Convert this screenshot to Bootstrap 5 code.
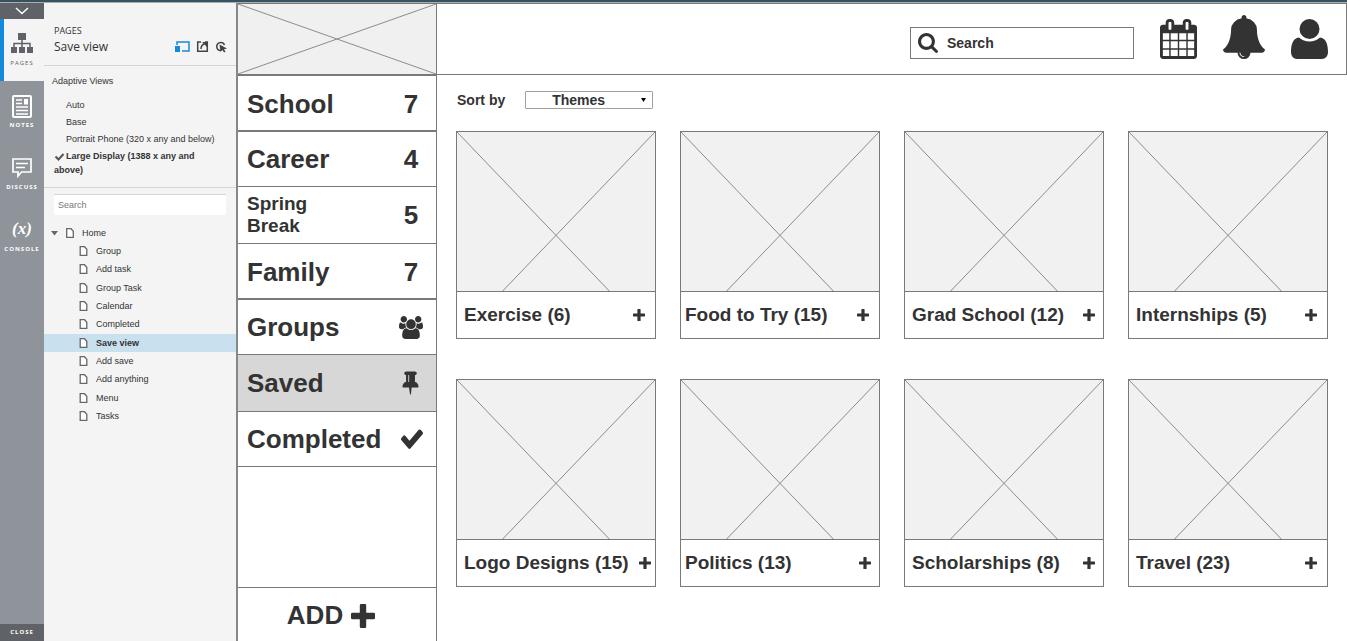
<!DOCTYPE html>
<html lang="en">
<head>
<meta charset="utf-8">
<meta name="viewport" content="width=device-width, initial-scale=1">
<title>Save view</title>
<link href="https://cdn.jsdelivr.net/npm/bootstrap@5.3.0/dist/css/bootstrap.min.css" rel="stylesheet">
<style>
  :root { --line: #797979; --ink: #333; --rail: #8f949a; --rail-dark: #5f6266; --blue: #138bdd; }
  body { font-family: "Liberation Sans", Arial, sans-serif; color: var(--ink); background: #fff; border-top: 2px solid #38535f; }
  a { color: inherit; text-decoration: none; }
  svg { display: block; flex: none; }
  .ink { fill: var(--ink); }
  .shell { min-height: calc(100vh - 2px); border-top: 1px solid #a9adb0; }

  /* Icon rail */
  .rail { flex: none; width: 44px; background: var(--rail); color: #fff; font: bold 6px/10px "Open Sans", sans-serif; letter-spacing: 1px; }
  .rail button { border: 0; padding: 0; color: #fff; background: var(--rail-dark); }
  .rail-toggle { height: 16px; }
  .rail-close { height: 17px; font-size: 6px; font-weight: 700; line-height: 17px; letter-spacing: 1px; }
  .rail-tab { height: 62px; padding-top: 13px; }
  .rail-tab .glyph { height: 24px; margin-bottom: 2px; }
  .rail-tab.current { background: #f4f4f4; color: #5f6266; border-left: 4px solid var(--blue); font-weight: 400; }
  .fx { font: italic bold 17px/22px "Liberation Serif", serif; letter-spacing: 0; }

  /* Pages panel */
  .pages { flex: none; width: 192px; background: #f4f4f4; font-size: 9px; line-height: 14px; }
  .pages-head { height: 63px; padding: 21px 8px 0 10px; border-bottom: 1px solid #d5d5d5; font-family: "Open Sans", sans-serif; }
  .pages-head .over { font-size: 9px; line-height: 14px; }
  .pages-head h1 { font-size: 12px; line-height: 18px; font-weight: 400; margin: 0; }
  .views { padding: 8px 8px 10px; border-bottom: 1px solid #d5d5d5; }
  .views ul { margin-top: 10px; }
  .views li { padding-left: 14px; margin-bottom: 3px; }
  .views li.chosen { padding: 0 8px 0 2px; margin: 0; font-weight: 700; }
  .views li svg { display: inline-block; margin-right: 1px; }
  .find { width: 172px; height: 21px; margin: 6px 10px 9px; padding: 0 4px; font-size: 9px; border: 0; border-top: 1px solid #d5d5d5; background: #fff; }
  .find::placeholder { color: #777; opacity: 1; }
  .tree a { height: 18px; gap: 8px; }
  .tree .root { padding-left: 7px; }
  .tree ul a { padding-left: 35px; }
  .tree ul li:nth-child(3n) { margin-top: 1px; }
  .tree .active { background: #c9e0ef; font-weight: 700; }

  /* Category menu */
  .menu { flex: none; width: 201px; border-left: 2px solid #85888b; border-right: 1px solid var(--line); }
  .menu-logo { height: 73px; border-top: 1px solid var(--line); border-bottom: 2px solid var(--line); background: #f0f0f0; }
  .menu-item { height: 55px; padding: 0 13px 0 9px; font-size: 26px; font-weight: 700; line-height: 30px; border-bottom: 1px solid var(--line); }
  .menu-item.heavy { height: 56px; padding-top: 2px; border-bottom-width: 2px; }
  .menu-item.roomy { height: 57px; }
  .menu-item .count { width: 24px; text-align: center; }
  .menu-item .long { font-size: 19px; line-height: 22px; }
  .menu-item.active { background: #d7d7d7; }
  .menu-add { height: 54px; border: 0; border-top: 1px solid var(--line); background: #fff; color: var(--ink); font-size: 26px; font-weight: 700; gap: 8px; padding: 2px 12px 0 0; }

  /* Main area */
  .bar { height: 72px; padding: 0 18px; gap: 26px; border: 1px solid var(--line); border-left: 0; }
  .bar button { border: 0; padding: 0; background: none; }
  .searchbox { width: 224px; height: 32px; padding: 0 7px; gap: 9px; border: 1px solid var(--line); margin-top: 7px; }
  .searchbox input { border: 0; padding: 1px 0 0; background: none; min-width: 0; font-size: 14px; font-weight: 700; color: var(--ink); }
  .searchbox input::placeholder { color: var(--ink); opacity: 1; }
  .bar .bell { margin-bottom: 4px; }
  .content { padding: 16px 19px 24px; }
  .sort { font-size: 14px; font-weight: 700; line-height: 18px; gap: 20px; margin-bottom: 22px; padding-left: 1px; }
  .sort select { width: 128px; height: 18px; padding: 0 0 0 26px; font-weight: 700; line-height: 16px; color: var(--ink); border: 1px solid #a0a0a0; border-radius: 1px; appearance: none;
    background: #fff url("data:image/svg+xml,%3Csvg xmlns='http://www.w3.org/2000/svg' width='5' height='4'%3E%3Cpath d='M0 0h5L2.500 4z'/%3E%3C/svg%3E") no-repeat right 6px center; }
  .boards { --bs-gutter-x: 24px; --bs-gutter-y: 40px; }
  .board { border: 1px solid var(--line); }
  .board .thumb { width: 100%; height: 160px; background: #f1f1f1; border-bottom: 1px solid var(--line); }
  .board-foot { height: 46px; padding: 0 10px 0 7px; font-size: 19px; font-weight: 700; line-height: 22px; }
  .board-foot button { border: 0; padding: 0; background: none; }
  .cross { stroke: #8c8c8c; stroke-width: 1; fill: none; vector-effect: non-scaling-stroke; }
</style>
</head>
<body>
<svg width="0" height="0" class="position-absolute" aria-hidden="true">
  <symbol id="page" viewBox="0 0 8 10"><path d="M.7.7h4.300l2.300 2.500v6.100H.7z" fill="#fff" stroke="#63676c" stroke-width="1.300"/></symbol>
  <symbol id="plus" viewBox="0 0 12 12"><path d="M5 0h2q.6 0 .6.600V4.400h3.800q.6 0 .6.600v2q0 .6-.6.600H7.600v3.800q0 .6-.6.600H5q-.6 0-.6-.6V7.600H.6Q0 7.600 0 7V5q0-.6.600-.6h3.800V.6Q4.400 0 5 0z" fill="#333"/></symbol>
  <symbol id="cross" viewBox="0 0 198 160" preserveAspectRatio="none"><path class="cross" d="M0 0L198 208M198 0L0 208"/></symbol>
</svg>

<div class="shell d-flex">
  <nav class="rail d-flex flex-column text-center" aria-label="Tools">
    <button class="rail-toggle d-flex justify-content-center align-items-center" aria-label="Collapse"><svg width="14" height="8" viewBox="0 0 14 8"><path d="M1 1l6 5.500L13 1" fill="none" stroke="#fff" stroke-width="1.500"/></svg></button>
    <a href="#" class="rail-tab current d-block pe-1">
      <span class="glyph d-flex justify-content-center"><svg width="22" height="21" viewBox="0 0 22 21"><g fill="#5f6266"><path d="M7 1h8v7H7zM0 15h6v6H0zM8 15h6v6H8zM16 15h6v6h-6z"/></g><path d="M11 8v7M3 15v-3.500h16V15" fill="none" stroke="#5f6266" stroke-width="1.500"/></svg></span>PAGES</a>
    <a href="#" class="rail-tab d-block">
      <span class="glyph d-flex justify-content-center"><svg width="20" height="24" viewBox="0 0 20 24"><rect x="1" y="2" width="18" height="21" rx="1" fill="none" stroke="#fff" stroke-width="2"/><path d="M4 6h6M4 9.500h6M4 13h12M4 16.500h12M4 20h12" stroke="#fff" stroke-width="1.500"/><path d="M12 5h4v5.500h-4z" fill="#fff"/></svg></span>NOTES</a>
    <a href="#" class="rail-tab d-block">
      <span class="glyph d-flex justify-content-center"><svg width="20" height="22" viewBox="0 0 20 22"><path d="M1 3h18v13H9.500L6 20v-4H1z" fill="none" stroke="#fff" stroke-width="1.700"/><path d="M4 7.500h12M4 11.500h9" stroke="#fff" stroke-width="1.500"/></svg></span>DISCUSS</a>
    <a href="#" class="rail-tab d-block"><span class="glyph fx d-block">(x)</span>CONSOLE</a>
    <button class="rail-close mt-auto">CLOSE</button>
  </nav>

  <aside class="pages">
    <header class="pages-head">
      <div class="over">PAGES</div>
      <div class="d-flex align-items-center">
        <h1 class="me-auto">Save view</h1>
        <svg width="53" height="12" viewBox="0 0 53 12"><path d="M2 4V1h12v9H7" fill="none" stroke="#138bdd" stroke-width="1.500"/><path d="M0 5h5v6H0z" fill="#138bdd"/><g fill="none" stroke="#444" stroke-width="1.500"><path d="M26 1h-3.300v9.300h9.600V1H30M26 8c0-3 1-4.500 4-5.500"/><path d="M45.500 9.500A4 4 0 1 1 49.500 4"/></g><path d="M27 1h5v5zM44.500 3.500l7.500 4-3 .7 1.500 2.600-1.500.8-1.500-2.600L45.500 11z" fill="#444"/></svg>
      </div>
    </header>
    <section class="views">
      <div>Adaptive Views</div>
      <ul class="list-unstyled mb-0">
        <li><a href="#">Auto</a></li>
        <li><a href="#">Base</a></li>
        <li><a href="#">Portrait Phone (320 x any and below)</a></li>
        <li class="chosen"><a href="#"><svg width="11" height="8" viewBox="0 0 11 8"><path d="M1.500 3.500L4.500 6.500 9.500 1" fill="none" stroke="#555" stroke-width="2"/></svg>Large Display (1388 x any and above)</a></li>
      </ul>
    </section>
    <input class="find d-block" type="search" placeholder="Search" aria-label="Search pages">
    <ul class="tree list-unstyled mb-0">
      <li><a href="#" class="root d-flex align-items-center"><svg width="7" height="5" viewBox="0 0 7 5"><path d="M0 0h7L3.500 4.500z" fill="#63676c"/></svg><svg width="8" height="10"><use href="#page"/></svg>Home</a>
        <ul class="list-unstyled">
          <li><a href="#" class="d-flex align-items-center"><svg width="9" height="10"><use href="#page"/></svg>Group</a></li>
          <li><a href="#" class="d-flex align-items-center"><svg width="9" height="10"><use href="#page"/></svg>Add task</a></li>
          <li><a href="#" class="d-flex align-items-center"><svg width="9" height="10"><use href="#page"/></svg>Group Task</a></li>
          <li><a href="#" class="d-flex align-items-center"><svg width="9" height="10"><use href="#page"/></svg>Calendar</a></li>
          <li><a href="#" class="d-flex align-items-center"><svg width="9" height="10"><use href="#page"/></svg>Completed</a></li>
          <li><a href="#" class="active d-flex align-items-center"><svg width="9" height="10"><use href="#page"/></svg>Save view</a></li>
          <li><a href="#" class="d-flex align-items-center"><svg width="9" height="10"><use href="#page"/></svg>Add save</a></li>
          <li><a href="#" class="d-flex align-items-center"><svg width="9" height="10"><use href="#page"/></svg>Add anything</a></li>
          <li><a href="#" class="d-flex align-items-center"><svg width="9" height="10"><use href="#page"/></svg>Menu</a></li>
          <li><a href="#" class="d-flex align-items-center"><svg width="9" height="10"><use href="#page"/></svg>Tasks</a></li>
        </ul>
      </li>
    </ul>
  </aside>

  <nav class="menu d-flex flex-column" aria-label="Categories">
    <div class="menu-logo"><svg width="100%" height="100%" viewBox="0 0 198 70" preserveAspectRatio="none"><path class="cross" d="M0 0L198 70M198 0L0 70"/></svg></div>
    <a href="#" class="menu-item heavy d-flex align-items-center justify-content-between">School<span class="count">7</span></a>
    <a href="#" class="menu-item d-flex align-items-center justify-content-between">Career<span class="count">4</span></a>
    <a href="#" class="menu-item roomy d-flex align-items-center justify-content-between"><span class="long">Spring<br>Break</span><span class="count">5</span></a>
    <a href="#" class="menu-item heavy d-flex align-items-center justify-content-between">Family<span class="count">7</span></a>
    <a href="#" class="menu-item d-flex align-items-center justify-content-between">Groups<svg class="ink" width="24" height="23" viewBox="0 0 1920 1792" preserveAspectRatio="none"><path d="M593 896q-162 5-265 128h-134q-82 0-138-40.500t-56-118.500q0-353 124-353 6 0 43.500 21t97.500 42.500 119 21.500q67 0 133-23-5 37-5 66 0 139 81 256zm1071 637q0 120-73 189.500t-194 69.500h-874q-121 0-194-69.500t-73-189.500q0-53 3.500-103.500t14-109 26.500-108.500 43-97.500 62-81 85.500-53.500 111.500-20q10 0 43 21.500t73 48 107 48 135 21.500 135-21.500 107-48 73-48 43-21.500q61 0 111.500 20t85.500 53.500 62 81 43 97.500 26.500 108.500 14 109 3.500 103.500zm-1024-1277q0 106-75 181t-181 75-181-75-75-181 75-181 181-75 181 75 75 181zm704 384q0 159-112.500 271.500t-271.500 112.500-271.500-112.500-112.500-271.500 112.500-271.500 271.500-112.500 271.500 112.500 112.500 271.500zm576 225q0 78-56 118.500t-138 40.500h-134q-103-123-265-128 81-117 81-256 0-29-5-66 66 23 133 23 59 0 119-21.500t97.500-42.500 43.500-21q124 0 124 353zm-128-609q0 106-75 181t-181 75-181-75-75-181 75-181 181-75 181 75 75 181z"/></svg></a>
    <a href="#" class="menu-item roomy active d-flex align-items-center justify-content-between">Saved<svg class="ink" width="25" height="24" viewBox="0 128 1792 1664"><path d="M800 864v-448q0-14-9-23t-23-9-23 9-9 23v448q0 14 9 23t23 9 23-9 9-23zm672 352q0 26-19 45t-45 19h-429l-51 483q-2 12-10.500 20.500t-20.500 8.500h-1q-27 0-32-27l-76-485h-404q-26 0-45-19t-19-45q0-123 78.500-221.500t177.500-98.500v-512q-52 0-90-38t-38-90 38-90 90-38h640q52 0 90 38t38 90-38 90-90 38v512q99 0 177.500 98.500t78.500 221.500z"/></svg></a>
    <a href="#" class="menu-item d-flex align-items-center justify-content-between">Completed<svg class="ink" width="22" height="20" viewBox="121 310 1550 1212" preserveAspectRatio="none"><path d="M1671 566q0 40-28 68l-724 724-136 136q-28 28-68 28t-68-28l-136-136-362-362q-28-28-28-68t28-68l136-136q28-28 68-28t68 28l294 295 656-657q28-28 68-28t68 28l136 136q28 28 28 68z"/></svg></a>
    <button class="menu-add mt-auto d-flex align-items-center justify-content-center">ADD<svg width="24" height="24"><use href="#plus"/></svg></button>
  </nav>

  <main class="flex-grow-1">
    <header class="bar d-flex align-items-center justify-content-end">
      <label class="searchbox d-flex align-items-center">
        <svg class="ink" width="20" height="20" viewBox="64 128 1664 1664"><path d="M1216 832q0-185-131.500-316.500t-316.500-131.500-316.500 131.500-131.500 316.500 131.500 316.500 316.500 131.500 316.500-131.500 131.500-316.500zm512 832q0 52-38 90t-90 38q-54 0-90-38l-343-342q-179 124-399 124-143 0-273.500-55.500t-225-150-150-225-55.500-273.500 55.500-273.500 150-225 225-150 273.500-55.500 273.500 55.500 225 150 150 225 55.500 273.500q0 220-124 399l343 343q37 37 37 90z"/></svg>
        <input type="text" placeholder="Search" aria-label="Search">
      </label>
      <button aria-label="Calendar"><svg class="ink" width="37" height="40" viewBox="64 0 1664 1792"><path d="M192 1664h288v-288h-288v288zm352 0h320v-288h-320v288zm-352-352h288v-320h-288v320zm352 0h320v-320h-320v320zm-352-384h288v-288h-288v288zm736 736h320v-288h-320v288zm-384-736h320v-288h-320v288zm768 736h288v-288h-288v288zm-384-352h320v-320h-320v320zm-352-864v-288q0-13-9.500-22.500t-22.500-9.500h-64q-13 0-22.500 9.500t-9.500 22.500v288q0 13 9.500 22.500t22.500 9.500h64q13 0 22.500-9.500t9.500-22.500zm736 864h288v-320h-288v320zm-384-384h320v-288h-320v288zm384 0h288v-288h-288v288zm32-480v-288q0-13-9.500-22.500t-22.500-9.500h-64q-13 0-22.500 9.500t-9.500 22.500v288q0 13 9.500 22.500t22.500 9.500h64q13 0 22.500-9.500t9.500-22.500zm384-64v1280q0 52-38 90t-90 38h-1408q-52 0-90-38t-38-90v-1280q0-52 38-90t90-38h128v-96q0-66 47-113t113-47h64q66 0 113 47t47 113v96h384v-96q0-66 47-113t113-47h64q66 0 113 47t47 113v96h128q52 0 90 38t38 90z"/></svg></button>
      <button class="bell" aria-label="Notifications"><svg class="ink" width="42" height="44" viewBox="64 0 1664 1792" preserveAspectRatio="none"><path d="M912 1696q0-16-16-16-59 0-101.500-42.500t-42.500-101.500q0-16-16-16t-16 16q0 73 51.500 124.500t124.500 51.500q16 0 16-16zm816-288q0 52-38 90t-90 38h-448q0 106-75 181t-181 75-181-75-75-181h-448q-52 0-90-38t-38-90q50-42 91-88t85-119.500 74.500-158.500 50-206 19.500-260q0-152 117-282.500t307-158.500q-8-19-8-39 0-40 28-68t68-28 68 28 28 68q0 20-8 39 190 28 307 158.500t117 282.500q0 139 19.500 260t50 206 74.500 158.500 85 119.500 91 88z"/></svg></button>
      <button aria-label="Account"><svg class="ink" width="37" height="40" viewBox="0 0 37 40"><circle cx="18.500" cy="10" r="10"/><path d="M8 18.500q4.500 4 10.500 4t10.500-4c6 .5 8 7 8 14.500 0 4-2.500 7-6 7H6c-3.500 0-6-3-6-7 0-7.500 2-14 8-14.500z"/></svg></button>
    </header>

    <div class="content">
      <div class="sort d-flex align-items-center">
        <label for="sort">Sort by</label>
        <select id="sort"><option>Themes</option></select>
      </div>
      <div class="boards row row-cols-2 row-cols-lg-4">
        <div class="col"><article class="board"><svg class="thumb"><use href="#cross"/></svg><div class="board-foot d-flex align-items-center justify-content-between"><a href="#">Exercise (6)</a><button aria-label="Add to Exercise"><svg width="12" height="12"><use href="#plus"/></svg></button></div></article></div>
        <div class="col"><article class="board"><svg class="thumb"><use href="#cross"/></svg><div class="board-foot d-flex align-items-center justify-content-between ps-1"><a href="#">Food to Try (15)</a><button aria-label="Add to Food to Try"><svg width="12" height="12"><use href="#plus"/></svg></button></div></article></div>
        <div class="col"><article class="board"><svg class="thumb"><use href="#cross"/></svg><div class="board-foot d-flex align-items-center justify-content-between pe-2"><a href="#">Grad School (12)</a><button aria-label="Add to Grad School"><svg width="12" height="12"><use href="#plus"/></svg></button></div></article></div>
        <div class="col"><article class="board"><svg class="thumb"><use href="#cross"/></svg><div class="board-foot d-flex align-items-center justify-content-between"><a href="#">Internships (5)</a><button aria-label="Add to Internships"><svg width="12" height="12"><use href="#plus"/></svg></button></div></article></div>
        <div class="col"><article class="board"><svg class="thumb"><use href="#cross"/></svg><div class="board-foot d-flex align-items-center justify-content-between pe-1"><a href="#">Logo Designs (15)</a><button aria-label="Add to Logo Designs"><svg width="12" height="12"><use href="#plus"/></svg></button></div></article></div>
        <div class="col"><article class="board"><svg class="thumb"><use href="#cross"/></svg><div class="board-foot d-flex align-items-center justify-content-between ps-1 pe-2"><a href="#">Politics (13)</a><button aria-label="Add to Politics"><svg width="12" height="12"><use href="#plus"/></svg></button></div></article></div>
        <div class="col"><article class="board"><svg class="thumb"><use href="#cross"/></svg><div class="board-foot d-flex align-items-center justify-content-between pe-2"><a href="#">Scholarships (8)</a><button aria-label="Add to Scholarships"><svg width="12" height="12"><use href="#plus"/></svg></button></div></article></div>
        <div class="col"><article class="board"><svg class="thumb"><use href="#cross"/></svg><div class="board-foot d-flex align-items-center justify-content-between"><a href="#">Travel (23)</a><button aria-label="Add to Travel"><svg width="12" height="12"><use href="#plus"/></svg></button></div></article></div>
      </div>
    </div>
  </main>
</div>
<script src="https://cdn.jsdelivr.net/npm/bootstrap@5.3.0/dist/js/bootstrap.bundle.min.js"></script>
</body>
</html>
